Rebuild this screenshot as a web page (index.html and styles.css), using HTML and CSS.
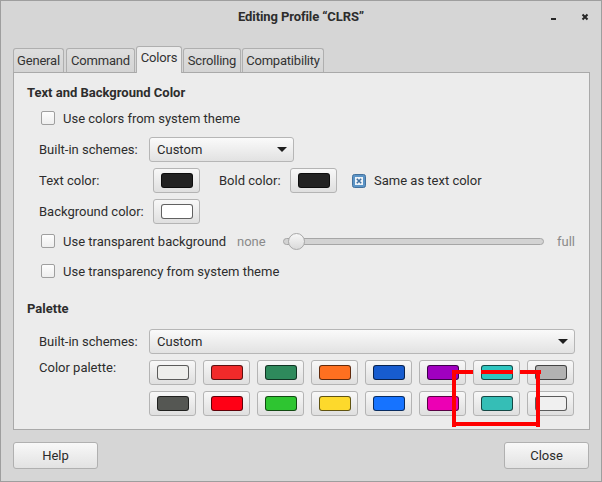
FILE: index.html
```html
<!DOCTYPE html>
<html>
<head>
<meta charset="utf-8">
<link rel="stylesheet" href="styles.css">
</head>
<body>
<div class="window">
  <div class="titlebar">
    <div></div>
    <div class="title">Editing Profile “CLRS”</div>
    <div class="wm">
      <svg width="38" height="8" viewBox="0 0 38 8">
        <rect x="0" y="5" width="5" height="2" fill="#262626"/>
        <path d="M31.5 1.5 L36.5 6.5 M36.5 1.5 L31.5 6.5" stroke="#262626" stroke-width="2"/>
      </svg>
    </div>
  </div>

  <div class="tabs">
    <div class="tab t-general">General</div>
    <div class="tab t-command">Command</div>
    <div class="tab active t-colors">Colors</div>
    <div class="tab t-scrolling">Scrolling</div>
    <div class="tab t-compat">Compatibility</div>
  </div>

  <div class="panel">
    <div class="heading">Text and Background Color</div>

    <div class="row check-row r1">
      <span class="cb"></span><span>Use colors from system theme</span>
    </div>

    <div class="row form r2">
      <span class="lbl">Built-in schemes:</span>
      <div class="combo small"><span>Custom</span><span class="arrow"></span></div>
    </div>

    <div class="row form r3">
      <span class="lbl">Text color:</span>
      <div class="cbtn gap"><span class="sw" style="background:#222222"></span></div>
      <span class="lbl2">Bold color:</span>
      <div class="cbtn"><span class="sw" style="background:#222222"></span></div>
      <svg class="cbx" width="14" height="14" viewBox="0 0 14 14">
        <rect x="0.5" y="0.5" width="13" height="13" rx="2" fill="#5b94c6" stroke="#44719c"/>
        <rect x="3" y="3" width="8" height="8" fill="#eef3f8"/>
        <path d="M4.8 4.8 L9.2 9.2 M9.2 4.8 L4.8 9.2" stroke="#3f70a0" stroke-width="1.6"/>
      </svg>
      <span>Same as text color</span>
    </div>

    <div class="row form r4">
      <span class="lbl">Background color:</span>
      <div class="cbtn gap"><span class="sw" style="background:#ffffff"></span></div>
    </div>

    <div class="row check-row r5">
      <span class="cb"></span><span class="tlabel">Use transparent background</span>
      <span class="muted">none</span>
      <div class="slider">
        <div class="groove"></div>
        <div class="handle"></div>
      </div>
      <span class="muted full">full</span>
    </div>

    <div class="row check-row r6">
      <span class="cb"></span><span>Use transparency from system theme</span>
    </div>

    <div class="heading r7">Palette</div>

    <div class="row form r8">
      <span class="lbl">Built-in schemes:</span>
      <div class="combo wide"><span>Custom</span><span class="arrow"></span></div>
    </div>

    <div class="row form pal r9">
      <span class="lbl pl">Color palette:</span>
      <div class="grid">
        <div class="pbtn"><span class="sw" style="background:#eeeeec"></span></div>
        <div class="pbtn"><span class="sw" style="background:#f02a2a"></span></div>
        <div class="pbtn"><span class="sw" style="background:#2e8a5c"></span></div>
        <div class="pbtn"><span class="sw" style="background:#ff7020"></span></div>
        <div class="pbtn"><span class="sw" style="background:#175ccf"></span></div>
        <div class="pbtn"><span class="sw" style="background:#a000c0"></span></div>
        <div class="pbtn"><span class="sw" style="background:#2ec5c0"></span></div>
        <div class="pbtn"><span class="sw" style="background:#b2b2b2"></span></div>
        <div class="pbtn"><span class="sw" style="background:#555753"></span></div>
        <div class="pbtn"><span class="sw" style="background:#ff0015"></span></div>
        <div class="pbtn"><span class="sw" style="background:#2ec531"></span></div>
        <div class="pbtn"><span class="sw" style="background:#fdd92c"></span></div>
        <div class="pbtn"><span class="sw" style="background:#1673ff"></span></div>
        <div class="pbtn"><span class="sw" style="background:#ec00b4"></span></div>
        <div class="pbtn"><span class="sw" style="background:#35beb6"></span></div>
        <div class="pbtn"><span class="sw" style="background:#f0f0f0"></span></div>
      </div>
    </div>
  </div>

  <div class="footer">
    <div class="btn">Help</div>
    <div class="btn">Close</div>
  </div>

  <svg class="mark" width="89" height="57" viewBox="0 0 89 57">
    <rect x="0" y="0" width="21" height="4" fill="#ff0000"/>
    <rect x="29" y="0" width="32" height="4" fill="#ff0000"/>
    <rect x="68" y="0" width="21" height="4" fill="#ff0000"/>
    <rect x="0" y="0" width="4" height="57" fill="#ff0000"/>
    <rect x="84" y="0" width="4" height="57" fill="#ff0000"/>
    <rect x="0" y="52" width="88" height="4" fill="#ff0000"/>
  </svg>
</div>
</body>
</html>
```

FILE: styles.css
```css
html, body {
  margin: 0;
  padding: 0;
  background: #d6d6d6;
}
body {
  font-family: Roboto, "Noto Sans", "Liberation Sans", sans-serif;
  font-size: 13px;
  color: #2d2d2d;
}
.window {
  width: 602px;
  height: 482px;
  box-sizing: border-box;
  border: 1px solid #9e9e9e;
  background: #d6d6d6;
  display: flex;
  flex-direction: column;
  position: relative;
}
.titlebar {
  height: 45px;
  display: grid;
  grid-template-columns: 1fr auto 1fr;
}
.title {
  line-height: 32px;
  font-weight: bold;
  letter-spacing: -0.1px;
}
.wm {
  display: flex;
  justify-content: flex-end;
  align-items: flex-start;
  padding: 12px 12px 0 0;
}
.tabs {
  display: flex;
  align-items: flex-end;
  gap: 1px;
  padding-left: 12px;
  height: 26px;
  position: relative;
  z-index: 1;
}
.tab {
  height: 24px;
  box-sizing: border-box;
  border: 1px solid #afafaf;
  border-bottom: none;
  border-radius: 3px 3px 0 0;
  background: linear-gradient(#dedede, #d4d4d4);
  line-height: 23px;
  text-align: center;
  color: #333;
  white-space: nowrap;
  letter-spacing: -0.2px;
}
.t-general { width: 51px; margin-right: 1px; }
.t-command { width: 69px; }
.t-colors { width: 46px; }
.t-scrolling { width: 58px; }
.t-compat { width: 82px; }
.tab.active {
  height: 27px;
  margin-bottom: -1px;
  background: #ececec;
  line-height: 22px;
}
.panel {
  margin: 0 11px 0 12px;
  height: 358px;
  box-sizing: border-box;
  border: 1px solid #a9a9a9;
  background: #ececec;
  padding: 10px 14px 0 13px;
}
.heading {
  height: 20px;
  line-height: 20px;
  font-weight: bold;
}
.row {
  display: flex;
  align-items: center;
}
.check-row {
  height: 20px;
  padding-left: 14px;
}
.form {
  padding-left: 12px;
  height: 25px;
}
.r1 { margin-top: 5px; }
.r2 { margin-top: 9px; }
.r3 { margin-top: 6px; }
.r4 { margin-top: 6px; }
.r5 { margin-top: 7px; }
.r6 { margin-top: 10px; }
.r7 { margin-top: 18px; }
.r8 { margin-top: 10px; }
.r9 { margin-top: 6px; }
.cb {
  width: 14px;
  height: 14px;
  box-sizing: border-box;
  border: 1px solid #9f9f9f;
  border-radius: 2px;
  background: linear-gradient(#fdfdfd, #eeeeee);
  margin-right: 8px;
  flex: none;
}
.lbl {
  width: 110px;
  flex: none;
}
.combo {
  height: 25px;
  box-sizing: border-box;
  border: 1px solid #b6b6b6;
  border-radius: 3px;
  background: linear-gradient(#fafafa, #e2e2e2);
  display: flex;
  align-items: center;
  justify-content: space-between;
  padding: 0 6px 0 7px;
  color: #2a2a2a;
}
.combo.small { width: 145px; }
.combo.wide { width: 426px; }
.arrow {
  width: 0;
  height: 0;
  border-left: 5px solid transparent;
  border-right: 5px solid transparent;
  border-top: 5px solid #1e1e1e;
}
.cbtn, .pbtn {
  width: 47px;
  height: 25px;
  box-sizing: border-box;
  border: 1px solid #b4b4b4;
  border-radius: 3px;
  background: linear-gradient(#f8f8f8, #dfdfdf);
  display: flex;
  align-items: center;
  justify-content: center;
  flex: none;
}
.cbtn.gap { margin-left: 4px; }
.sw {
  width: 32px;
  height: 15px;
  box-sizing: border-box;
  border: 1px solid rgba(0, 0, 0, 0.62);
  border-radius: 3px;
}
.lbl2 {
  margin-left: 19px;
  width: 71px;
}
.cbx {
  margin-left: 15px;
  margin-right: 8px;
  flex: none;
}
.tlabel {
  width: 174px;
  flex: none;
}
.muted { color: #8a8a8a; }
.slider {
  width: 265px;
  height: 17px;
  margin-left: 17px;
  position: relative;
  display: flex;
  align-items: center;
}
.groove {
  width: 100%;
  height: 7px;
  box-sizing: border-box;
  border: 1px solid #a6a6a6;
  border-radius: 4px;
  background: #d3d3d3;
}
.handle {
  position: absolute;
  left: 5px;
  top: 0;
  width: 17px;
  height: 17px;
  box-sizing: border-box;
  border: 1px solid #a8a8a8;
  border-radius: 50%;
  background: linear-gradient(#f7f7f7, #dadada);
}
.full { margin-left: 13px; }
.pal {
  align-items: flex-start;
  height: auto;
}
.pl {
  line-height: 15px;
}
.grid {
  display: grid;
  grid-template-columns: repeat(8, 47px);
  column-gap: 7px;
  row-gap: 6px;
}
.footer {
  display: flex;
  justify-content: space-between;
  padding: 12px 12px 0 12px;
}
.btn {
  width: 85px;
  height: 27px;
  box-sizing: border-box;
  border: 1px solid #b0b0b0;
  border-radius: 3px;
  background: linear-gradient(#f8f8f8, #e2e2e2);
  display: flex;
  align-items: center;
  justify-content: center;
  color: #2a2a2a;
}
.mark {
  position: absolute;
  left: 451px;
  top: 369px;
}
```
